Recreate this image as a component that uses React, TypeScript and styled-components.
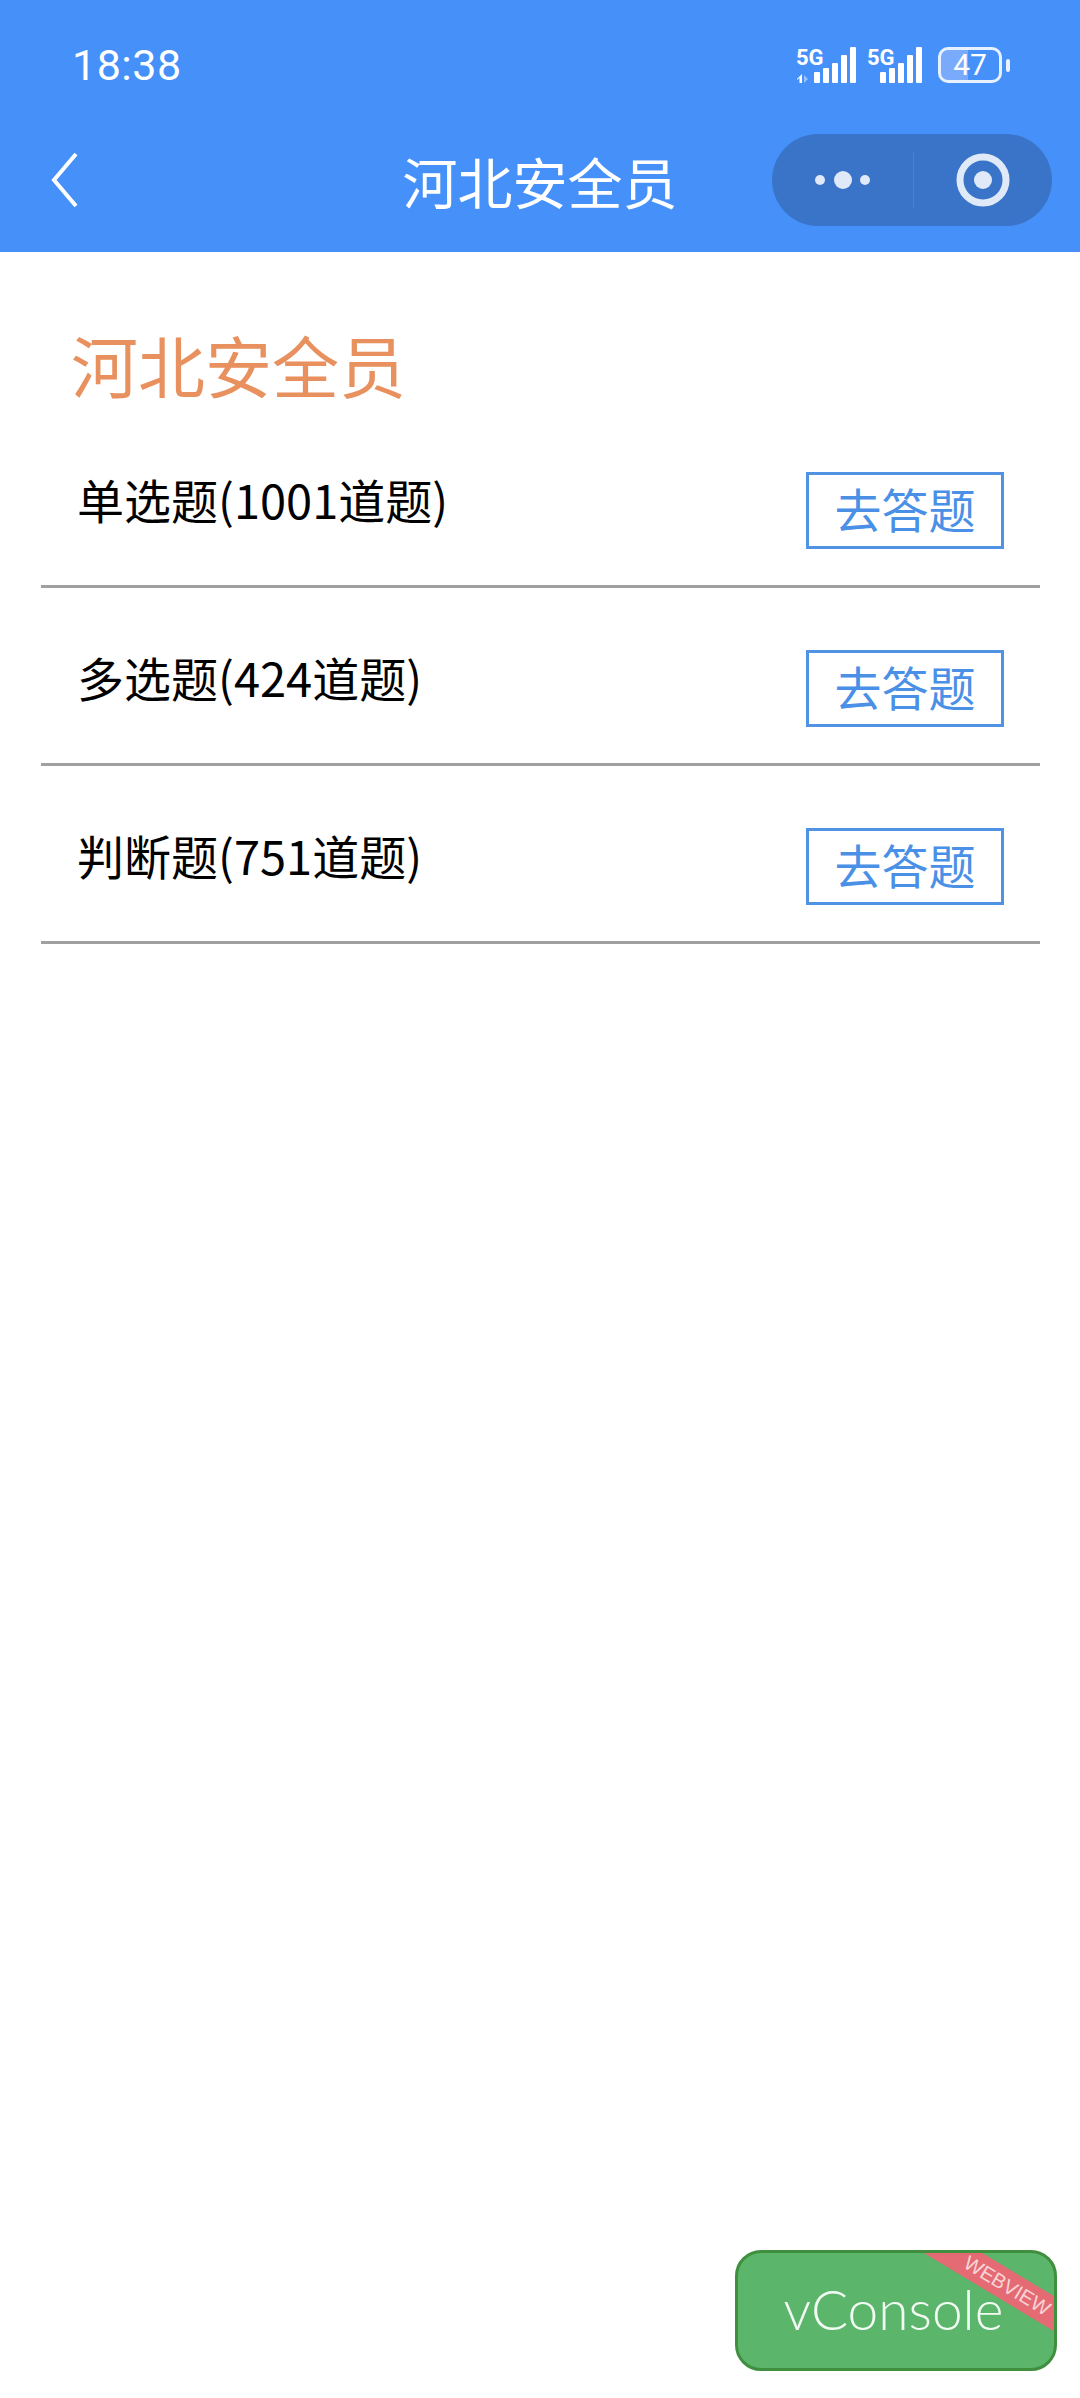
import React from 'react';
import styled, { createGlobalStyle } from 'styled-components';

const GlobalStyle = createGlobalStyle`
    html, body {
        margin: 0;
        padding: 0;
        background-color: #ffffff;
    }
    body {
        font-family: "Noto Sans CJK SC", "Noto Sans", sans-serif;
    }
`;

const Page = styled.div`
    width: 1080px;
    height: 2398px;
    background-color: #ffffff;
    overflow: hidden;
`;

const Header = styled.header`
    height: 252px;
    background-color: #4690fa;
    color: #ffffff;
    display: flex;
    flex-direction: column;
`;

const StatusBar = styled.div`
    height: 134px;
    padding: 43px 70px 0 72px;
    box-sizing: border-box;
    display: flex;
    justify-content: space-between;
    align-items: flex-start;
`;

const Time = styled.span`
    font-family: Roboto, sans-serif;
    font-size: 43px;
    line-height: 44px;
    letter-spacing: 0.5px;
`;

const StatusIcons = styled.div`
    display: flex;
    align-items: flex-start;
    margin-top: 4px;
`;

const SignalIcon = styled.svg<{ $gap: number }>`
    width: 64px;
    height: 44px;
    margin: -6px 0 0 ${(props) => props.$gap}px;
`;

const Battery = styled.div`
    width: 64px;
    height: 36px;
    margin-left: 7px;
    box-sizing: border-box;
    border: 3px solid #e8f1ff;
    border-radius: 10px;
    background: linear-gradient(to right, #7aaafc 47%, transparent 47%);
    font-family: Roboto, sans-serif;
    font-size: 30px;
    line-height: 30px;
    text-align: center;
`;

const BatteryTip = styled.div`
    width: 4px;
    height: 13px;
    margin: 12px 0 0 4px;
    border-radius: 2px;
    background-color: #e8f1ff;
`;

const NavBar = styled.nav`
    height: 118px;
    padding: 0 28px;
    display: grid;
    grid-template-columns: 1fr auto 1fr;
    align-items: flex-start;
`;

const NavTitle = styled.div`
    font-size: 55px;
    line-height: 92px;
`;

const BackIcon = styled.svg`
    width: 30px;
    height: 56px;
    margin: 18px 0 0 22px;
`;

const Capsule = styled.div`
    justify-self: end;
    width: 280px;
    height: 92px;
    border-radius: 46px;
    background-color: #3a74c8;
    display: flex;
    align-items: center;
`;

const CapsuleDivider = styled.div`
    width: 1px;
    height: 56px;
    background-color: #4a80cf;
`;

const CapsuleSlot = styled.div<{ $width: number }>`
    width: ${(props) => props.$width}px;
    display: flex;
    justify-content: center;
    align-items: center;
`;

const Content = styled.main`
    display: flex;
    flex-direction: column;
`;

const PageTitle = styled.h1`
    margin: 0;
    padding: 78px 0 0 71px;
    height: 158px;
    box-sizing: border-box;
    font-size: 67px;
    line-height: 68px;
    font-weight: 400;
    color: #e8915f;
`;

const QuestionRow = styled.div`
    height: 178px;
    margin: 0 40px 0 41px;
    padding: 62px 36px 0 36px;
    box-sizing: border-box;
    border-bottom: 3px solid #a0a0a0;
    display: flex;
    justify-content: space-between;
    align-items: flex-start;
`;

const QuestionLabel = styled.span`
    font-size: 47px;
    line-height: 60px;
    margin-top: -3px;
    color: #000000;
`;

const AnswerButton = styled.button`
    width: 198px;
    height: 77px;
    padding: 0 0 5px;
    box-sizing: border-box;
    border: 3px solid #5092e4;
    border-radius: 0;
    background-color: #ffffff;
    color: #4a90e6;
    font-family: inherit;
    font-size: 47px;
    line-height: 64px;
`;

const VConsoleButton = styled.div`
    position: fixed;
    left: 735px;
    top: 2250px;
    width: 322px;
    height: 121px;
    padding-right: 5px;
    box-sizing: border-box;
    border: 3px solid #3f8f3f;
    border-radius: 26px;
    background-color: #5bb56b;
    color: #f2fbf3;
    font-family: Lato, sans-serif;
    font-weight: 300;
    font-size: 55px;
    line-height: 112px;
    text-align: center;
    overflow: hidden;
`;

const Ribbon = styled.div`
    position: absolute;
    left: 150px;
    top: 15px;
    width: 230px;
    height: 30px;
    padding-left: 10px;
    box-sizing: border-box;
    background-color: #e46a74;
    color: #f8d4d6;
    font-family: "Liberation Sans", sans-serif;
    font-size: 20px;
    line-height: 30px;
    text-align: center;
    transform: rotate(31deg);
`;

const Signal: React.FC<{ dual?: boolean }> = ({ dual }) => (
    <SignalIcon $gap={dual ? 0 : 7} viewBox="0 -6 64 44" fill="#ffffff">
        <text x="0" y="18" fontFamily="Roboto, sans-serif" fontWeight="700" fontSize="22">5G</text>
        {dual && <path d="M1 32 L6 27 V36 H3.5 V31 L1 33 Z" />}
        {dual && <path d="M8 28 L12 32 L8 36 Z" opacity="0.45" />}
        <rect x={dual ? 18 : 13} y="25" width="6" height="11" rx="1" />
        <rect x={dual ? 27 : 22} y="21" width="6" height="15" rx="1" />
        <rect x={dual ? 36 : 31} y="16" width="6" height="20" rx="1" />
        <rect x={dual ? 45 : 40} y="8" width="6" height="28" rx="1" />
        <rect x={dual ? 54 : 49} y="0" width="6" height="36" rx="1" />
    </SignalIcon>
);

const questions = [
    { id: 'single', label: '单选题(1001道题)' },
    { id: 'multi', label: '多选题(424道题)' },
    { id: 'judge', label: '判断题(751道题)' },
];

const App: React.FC = () => {
    return (
        <Page>
            <GlobalStyle />
            <Header>
                <StatusBar>
                    <Time>18:38</Time>
                    <StatusIcons>
                        <Signal dual />
                        <Signal />
                        <Battery>47</Battery>
                        <BatteryTip />
                    </StatusIcons>
                </StatusBar>
                <NavBar>
                    <BackIcon viewBox="0 0 30 56" fill="none" stroke="#ffffff" strokeWidth="4">
                        <path d="M26 2 L4 28 L26 54" />
                    </BackIcon>
                    <NavTitle>河北安全员</NavTitle>
                    <Capsule>
                        <CapsuleSlot $width={141}>
                            <svg width="60" height="20" viewBox="0 0 60 20" fill="#dfe9f7">
                                <circle cx="7" cy="10" r="5" />
                                <circle cx="30" cy="10" r="9" />
                                <circle cx="52" cy="10" r="5" />
                            </svg>
                        </CapsuleSlot>
                        <CapsuleDivider />
                        <CapsuleSlot $width={138}>
                            <svg width="54" height="54" viewBox="0 0 54 54" fill="none">
                                <circle cx="27" cy="27" r="23" stroke="#dfe9f7" strokeWidth="7" />
                                <circle cx="27" cy="27" r="9" fill="#dfe9f7" />
                            </svg>
                        </CapsuleSlot>
                    </Capsule>
                </NavBar>
            </Header>
            <Content>
                <PageTitle>河北安全员</PageTitle>
                {questions.map((q) => (
                    <QuestionRow key={q.id}>
                        <QuestionLabel>{q.label}</QuestionLabel>
                        <AnswerButton>去答题</AnswerButton>
                    </QuestionRow>
                ))}
            </Content>
            <VConsoleButton>
                vConsole
                <Ribbon>WEBVIEW</Ribbon>
            </VConsoleButton>
        </Page>
    );
};

export default App;
